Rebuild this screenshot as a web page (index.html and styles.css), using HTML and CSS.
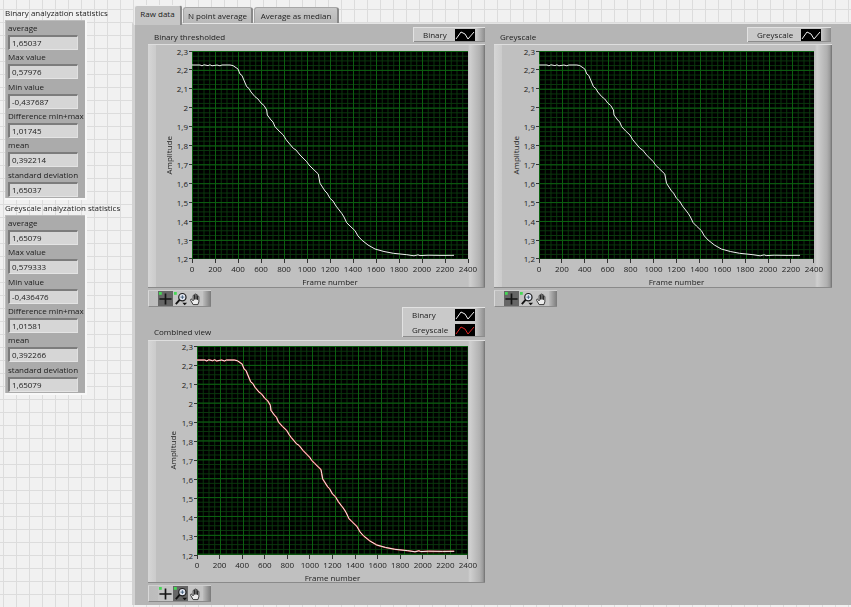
FILE: index.html
```html
<!DOCTYPE html>
<html lang="en">
<head>
<meta charset="utf-8">
<title>Analyzation statistics</title>
<link rel="stylesheet" href="styles.css">
</head>
<body>
<svg class="defs" width="0" height="0" aria-hidden="true">
  <defs>
    <polyline id="curve" fill="none" vector-effect="non-scaling-stroke" points="0,14 8,14 10,14.8 12,13.8 16,14.6 18,13.8 20,14.8 25,14 28,14.8 30,14 38,14 41,14.6 46,18 48,23 50,24.500 51,27 54.7,35.700 57,37.500 59,41 63,45.700 66,48 69,52 72,54.500 74.700,59 75.300,64 79,69 81,71 83,75.700 87,80 91.300,84 94,88.500 96,91 101.300,97.300 104,99 108,104 114.700,110.700 117,114 120,117 126.300,123 127,127 128,132.300 133,140 135,142 138,147.300 141,150 144,155 149.700,162.300 152,166 154.700,171.700 158,175 163,179.700 166,185 169.700,189 176,194 183,198 192,200.500 201.300,202.300 214.700,203.700 222,204.800 226,203.800 228,204.600 236,204.200 250,204.400 262,204.300"/>
    <g id="i-cross"><path d="M8 1.500v12M1.500 7.500h13" stroke="#151515" stroke-width="1.800" fill="none"/><rect x="1" y="0" width="3" height="3" fill="#45d855"/></g>
    <g id="i-zoom"><circle cx="10" cy="5.500" r="3.900" fill="#e4e9f4" stroke="#1c1c1c" stroke-width="1.300"/><path d="M7 8.500 3 13" stroke="#111" stroke-width="2"/><path d="M8 5.500h4M10 3.500v4" stroke="#34506e" stroke-width=".9"/><rect x="1" y="0" width="3" height="3" fill="#45d855"/><path d="M10 11.500h5l-2.500 2.800z" fill="#111"/></g>
    <g id="i-hand"><path d="M5.500 13.500 2.800 9c-.6-1.100.8-1.900 1.500-.9l1.200 1.400V4.200c0-1.200 1.500-1.200 1.500 0V8V3c0-1.200 1.600-1.200 1.600 0V8V3.600c0-1.200 1.500-1.200 1.500 0V8.300V5.200c0-1.100 1.500-1.100 1.500 0V10.500l-1 3z" fill="#ececec" stroke="#1e1e1e" stroke-width=".9" stroke-linejoin="round"/></g>
  </defs>
</svg>
<div class="page">
  <aside class="side">
    <h2 class="cluster-title">Binary analyzation statistics</h2>
    <section class="cluster">
      <div class="stat"><label>average</label><output>1,65037</output></div>
      <div class="stat"><label>Max value</label><output>0,57976</output></div>
      <div class="stat"><label>Min value</label><output>-0,437687</output></div>
      <div class="stat"><label>Difference min+max</label><output>1,01745</output></div>
      <div class="stat"><label>mean</label><output>0,392214</output></div>
      <div class="stat"><label>standard deviation</label><output>1,65037</output></div>
    </section>
    <h2 class="cluster-title second">Greyscale analyzation statistics</h2>
    <section class="cluster">
      <div class="stat"><label>average</label><output>1,65079</output></div>
      <div class="stat"><label>Max value</label><output>0,579333</output></div>
      <div class="stat"><label>Min value</label><output>-0,436476</output></div>
      <div class="stat"><label>Difference min+max</label><output>1,01581</output></div>
      <div class="stat"><label>mean</label><output>0,392266</output></div>
      <div class="stat"><label>standard deviation</label><output>1,65079</output></div>
    </section>
  </aside>
  <main class="tabs">
    <nav class="tabbar">
      <span class="tab active">Raw data</span>
      <span class="tab t2">N point average</span>
      <span class="tab t3">Average as median</span>
    </nav>
    <div class="panel">
      <article class="chart">
        <header class="chart-head">
          <h3>Binary thresholded</h3>
          <div class="legend">
            <div class="legend-row"><span>Binary</span><svg class="swatch" viewBox="0 0 20 12"><path d="M1 10 6 3l4 2 3 5 6-7" fill="none" stroke="#eee"/></svg></div>
          </div>
        </header>
        <div class="frame">
          <div class="yside">
            <span class="ylabel">Amplitude</span>
            <div class="yticks"><span>2,3</span><span>2,2</span><span>2,1</span><span>2</span><span>1,9</span><span>1,8</span><span>1,7</span><span>1,6</span><span>1,5</span><span>1,4</span><span>1,3</span><span>1,2</span></div>
          </div>
          <div class="plot"><svg viewBox="0 0 276 208" preserveAspectRatio="none"><use href="#curve" class="white"/></svg></div>
          <div class="xside">
            <div class="xticks"><span>0</span><span>200</span><span>400</span><span>600</span><span>800</span><span>1000</span><span>1200</span><span>1400</span><span>1600</span><span>1800</span><span>2000</span><span>2200</span><span>2400</span></div>
            <div class="xlabel">Frame number</div>
          </div>
        </div>
        <div class="palette">
          <span class="tool on"><svg viewBox="0 0 16 15"><use href="#i-cross"/></svg></span>
          <span class="tool"><svg viewBox="0 0 16 15"><use href="#i-zoom"/></svg></span>
          <span class="tool"><svg viewBox="0 0 16 15"><use href="#i-hand"/></svg></span>
        </div>
      </article>
      <article class="chart second-chart">
        <header class="chart-head">
          <h3>Greyscale</h3>
          <div class="legend">
            <div class="legend-row"><span>Greyscale</span><svg class="swatch" viewBox="0 0 20 12"><path d="M1 10 6 3l4 2 3 5 6-7" fill="none" stroke="#eee"/></svg></div>
          </div>
        </header>
        <div class="frame">
          <div class="yside">
            <span class="ylabel">Amplitude</span>
            <div class="yticks"><span>2,3</span><span>2,2</span><span>2,1</span><span>2</span><span>1,9</span><span>1,8</span><span>1,7</span><span>1,6</span><span>1,5</span><span>1,4</span><span>1,3</span><span>1,2</span></div>
          </div>
          <div class="plot"><svg viewBox="0 0 276 208" preserveAspectRatio="none"><use href="#curve" class="white"/></svg></div>
          <div class="xside">
            <div class="xticks"><span>0</span><span>200</span><span>400</span><span>600</span><span>800</span><span>1000</span><span>1200</span><span>1400</span><span>1600</span><span>1800</span><span>2000</span><span>2200</span><span>2400</span></div>
            <div class="xlabel">Frame number</div>
          </div>
        </div>
        <div class="palette">
          <span class="tool on"><svg viewBox="0 0 16 15"><use href="#i-cross"/></svg></span>
          <span class="tool"><svg viewBox="0 0 16 15"><use href="#i-zoom"/></svg></span>
          <span class="tool"><svg viewBox="0 0 16 15"><use href="#i-hand"/></svg></span>
        </div>
      </article>
      <article class="chart combined">
        <header class="chart-head">
          <h3>Combined view</h3>
          <div class="legend">
            <div class="legend-row"><span>Binary</span><svg class="swatch" viewBox="0 0 20 12"><path d="M1 10 6 3l4 2 3 5 6-7" fill="none" stroke="#eee"/></svg></div>
            <div class="legend-row"><span>Greyscale</span><svg class="swatch" viewBox="0 0 20 12"><path d="M1 10 6 3l4 2 3 5 6-7" fill="none" stroke="#d22"/></svg></div>
          </div>
        </header>
        <div class="frame">
          <div class="yside">
            <span class="ylabel">Amplitude</span>
            <div class="yticks"><span>2,3</span><span>2,2</span><span>2,1</span><span>2</span><span>1,9</span><span>1,8</span><span>1,7</span><span>1,6</span><span>1,5</span><span>1,4</span><span>1,3</span><span>1,2</span></div>
          </div>
          <div class="plot"><svg viewBox="0 0 276 208" preserveAspectRatio="none"><use href="#curve" class="red"/><use href="#curve" class="white"/></svg></div>
          <div class="xside">
            <div class="xticks"><span>0</span><span>200</span><span>400</span><span>600</span><span>800</span><span>1000</span><span>1200</span><span>1400</span><span>1600</span><span>1800</span><span>2000</span><span>2200</span><span>2400</span></div>
            <div class="xlabel">Frame number</div>
          </div>
        </div>
        <div class="palette">
          <span class="tool"><svg viewBox="0 0 16 15"><use href="#i-cross"/></svg></span>
          <span class="tool on"><svg viewBox="0 0 16 15"><use href="#i-zoom"/></svg></span>
          <span class="tool"><svg viewBox="0 0 16 15"><use href="#i-hand"/></svg></span>
        </div>
      </article>
    </div>
  </main>
</div>
</body>
</html>
```
FILE: styles.css
```css
* { box-sizing: border-box; }
html, body { margin: 0; height: 607px; overflow: hidden; }
body {
  font-family: "Open Sans", "Noto Sans", sans-serif;
  font-size: 8px;
  color: #1c1c1c;
  background-color: #f1f1f1;
  background-image:
    linear-gradient(#dcdcdc 1px, transparent 1px),
    linear-gradient(90deg, #dcdcdc 1px, transparent 1px);
  background-size: 13px 13px;
  background-position: 3px 9px;
}
.defs { position: absolute; }
.page { display: flex; height: 607px; filter: blur(0.3px); }

.side { width: 132px; flex: none; padding: 6px 0 0 5px; }
.cluster-title { margin: 0; font-size: 8px; font-weight: 400; line-height: 14px; height: 14px; white-space: nowrap; }
.cluster-title.second { margin-top: 1px; }
.cluster {
  width: 82px;
  height: 180px;
  padding: 1px 0 0 3px;
  background: #ababab;
  border-right: 2px solid #f8f8f8;
  border-bottom: 2px solid #f8f8f8;
  box-shadow: inset 1px 1px 0 #bdbdbd;
}
.stat { height: 29.33px; display: flex; flex-direction: column; }
.stat label { height: 14px; line-height: 14px; white-space: nowrap; }
.stat output {
  width: 70px;
  height: 15px;
  line-height: 12px;
  padding-left: 2px;
  background: #d6d6d6;
  border-style: solid;
  border-width: 2px 1px 1px 2px;
  border-color: #7c7c7c #e0e0e0 #e4e4e4 #7c7c7c;
}

.tabs { flex: 1; min-width: 0; padding-top: 5px; height: 605px; display: flex; flex-direction: column; }
.tabbar { height: 18px; flex: none; display: flex; align-items: flex-end; padding-left: 2px; gap: 1px; }
.tab {
  height: 16px;
  line-height: 16px;
  text-align: center;
  background: linear-gradient(#c8c8c8, #b8b8b8);
  border: 1px solid #a6a6a6;
  border-bottom: 0;
  border-right: 2px solid #888;
  border-radius: 3px 3px 0 0;
  white-space: nowrap;
}
.tab.active {
  width: 48px;
  height: 20px;
  margin-bottom: -2px;
  position: relative;
  z-index: 1;
  background: #c6c6c6;
  border-top-color: #f0f0f0;
  border-left-color: #ececec;
}
.tab.t2 { width: 70px; }
.tab.t3 { width: 85px; }
.panel {
  flex: 1;
  display: grid;
  grid-template-columns: 337px 338px;
  grid-template-rows: 280px 295px;
  column-gap: 9px;
  padding: 3px 0 0 13px;
  background: #b5b5b5;
  border-top: 1px solid #e4e4e4;
  border-left: 3px solid #d2d2d2;
}

.chart { display: flex; flex-direction: column; }
.chart-head { height: 17px; flex: none; display: flex; justify-content: space-between; align-items: flex-start; }
.chart-head h3 { margin: 3px 0 0 6px; font-size: 8px; font-weight: 400; line-height: 14px; white-space: nowrap; }
.legend {
  width: 72px;
  padding-right: 10px;
  background: linear-gradient(90deg, #c9c9c9 88%, #8c8c8c);
  box-shadow: inset 1px 1px 0 #e2e2e2, inset 0 -1px 0 #8c8c8c;
}
.legend-row { height: 15px; display: flex; justify-content: space-between; align-items: center; padding-left: 10px; }
.swatch { width: 20px; height: 12px; background: #000; display: block; }

.second-chart .legend { width: 84px; margin-right: 1px; }

.frame {
  height: 244px;
  flex: none;
  display: grid;
  grid-template-columns: 44px 276px;
  grid-template-rows: 208px auto;
  padding-top: 6px;
  background:
    linear-gradient(90deg, #d6d6d6 0, #cbcbcb 8px, transparent 8px),
    linear-gradient(270deg, #6f6f6f 0, #9a9a9a 2px, #b0b0b0 5px, #cfcfcf 15px, transparent 17px),
    #c0c0c0;
  border-top: 1px solid #dedede;
  border-bottom: 1px solid #8a8a8a;
}
.second-chart .frame { grid-template-columns: 45px 275px; }
.yside { display: flex; justify-content: flex-end; align-items: center; }
.ylabel { writing-mode: vertical-rl; transform: rotate(180deg); line-height: 11px; margin-right: 2px; }
.combined .ylabel { margin-right: 3px; }
.yticks { width: 16px; height: 100%; display: flex; flex-direction: column; justify-content: space-between; }
.yticks span { height: 0; display: flex; justify-content: flex-end; align-items: center; white-space: nowrap; }
.yticks span::after { content: ""; width: 3px; height: 1px; margin-left: 1px; background: #333; flex: none; }

.plot {
  background-color: #000;
  background-image:
    linear-gradient(#0b6010 1px, transparent 1px),
    linear-gradient(90deg, #0b6010 1px, transparent 1px),
    linear-gradient(#0a380d 1px, transparent 1px),
    linear-gradient(90deg, #0a380d 1px, transparent 1px);
  background-size: 100% 18.9px, 23px 100%, 100% 4.73px, 5.75px 100%;
}
.plot svg { display: block; width: 100%; height: 100%; overflow: hidden; }
.white { stroke: #efefef; stroke-width: 1; }
.red { stroke: #c83030; stroke-width: 1.5; }

.xside { grid-column: 2; }
.xticks { height: 17px; display: flex; justify-content: space-between; line-height: 11px; }
.xticks span { width: 0; display: flex; flex-direction: column; align-items: center; white-space: nowrap; }
.xticks span::before { content: ""; width: 1px; height: 4px; flex: none; background: #333; }
.xlabel { text-align: center; line-height: 11px; }

.palette {
  width: 63px;
  height: 17px;
  margin-top: 2px;
  flex: none;
  display: flex;
  align-items: center;
  padding-left: 9px;
  background: linear-gradient(90deg, #bcbcbc 0, #c6c6c6 85%, #7a7a7a 100%);
  border-top: 1px solid #cfcfcf;
  border-bottom: 1px solid #8a8a8a;
  border-left: 1px solid #d8d8d8;
}
.tool { width: 15px; height: 15px; display: flex; align-items: center; justify-content: center; background: #c4c4c4; }
.tool.on { background: #666; }
.tool svg { width: 15px; height: 14px; display: block; }

.combined .chart-head { height: 33px; align-items: flex-end; }
.combined .chart-head h3 { margin-bottom: 1px; }
.combined .legend { align-self: flex-start; height: 30px; width: 83px; }
.combined .frame { height: 243px; grid-template-columns: 49px 271px; grid-template-rows: 209px auto; padding-top: 5px; }
```
